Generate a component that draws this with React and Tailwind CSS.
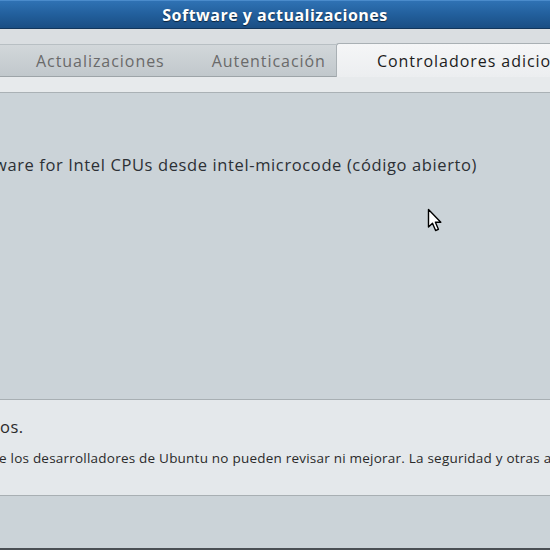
import React from "react";

const Cursor = () => (
  <svg width="16" height="26" viewBox="0 0 16 26" className="absolute left-[427px] top-[208px]">
    <path d="M1.5 1.5 L1.5 19 L5.5 15.2 L8.6 22.5 L11.4 21.3 L8.4 14.2 L13.8 14.2 Z" fill="#fff" stroke="#000" strokeWidth="1.4" strokeLinejoin="round" />
  </svg>
);

export default function App() {
  return (
    <div
      className="relative w-[550px] h-[550px] overflow-hidden bg-[#cbd3d8] flex flex-col"
      style={{ fontFamily: '"Open Sans", "DejaVu Sans", sans-serif' }}
    >
      {/* title bar */}
      <div className="h-[29px] shrink-0 flex items-center justify-center bg-gradient-to-b from-[#2f72b4] via-[#225f9c] to-[#1a4e84] border-t border-[#4a8bcb] border-b border-b-[#12365c]">
        <span className="text-white font-bold text-[16px] tracking-[0.5px] [text-shadow:0_1px_1px_rgba(0,0,0,0.6)]">
          Software y actualizaciones
        </span>
      </div>

      {/* tabs */}
      <div className="shrink-0 bg-[#dadee1] pt-[14px]">
        <div className="flex h-[34px] items-end">
          <div className="flex-none w-[336px] h-[33px] bg-gradient-to-b from-[#d2d7da] to-[#c1c8cc] border-t border-[#b8bfc3] border-b border-b-[#9da4a8] flex items-center pl-[36px] gap-[47px] text-[16px] tracking-[0.95px] text-[#6a6a6a] whitespace-nowrap">
            <span>Actualizaciones</span>
            <span>Autenticación</span>
          </div>
          <div className="flex-1 h-[34px] bg-gradient-to-b from-[#f5f6f7] to-[#eceef0] border-l border-t border-[#a9b0b4] rounded-tl-[3px] flex items-center pl-[40px] text-[16px] tracking-[0.95px] text-[#1c1c1c] whitespace-nowrap overflow-hidden">
            Controladores adicionales
          </div>
        </div>
        <div className="h-[16px] bg-[#e7eaec] border-b border-[#aab1b5]" />
      </div>

      {/* main list */}
      <div className="h-[307px] shrink-0 pt-[60px] border-b border-[#a8afb3]">
        <div className="text-[16.5px] tracking-[0.62px] text-[#2c3035] whitespace-nowrap -ml-[6px]">
          ware for Intel CPUs desde intel-microcode (código abierto)
        </div>
      </div>

      {/* info panel */}
      <div className="h-[96px] shrink-0 bg-[#e4e8eb] border-b border-[#a8afb3] pt-[16px] whitespace-nowrap">
        <div className="text-[16.5px] tracking-[0.5px] text-[#2a2a2a] leading-[22px]">os.</div>
        <div className="mt-[10px] text-[13.5px] tracking-[0.22px] text-[#2a2a2a] leading-[20px] -ml-[1px]">
          e los desarrolladores de Ubuntu no pueden revisar ni mejorar. La seguridad y otras actualizaciones
        </div>
      </div>

      <div className="flex-1" />
      <div className="h-[2px] bg-[#4a4f54]" />

      <Cursor />
    </div>
  );
}
